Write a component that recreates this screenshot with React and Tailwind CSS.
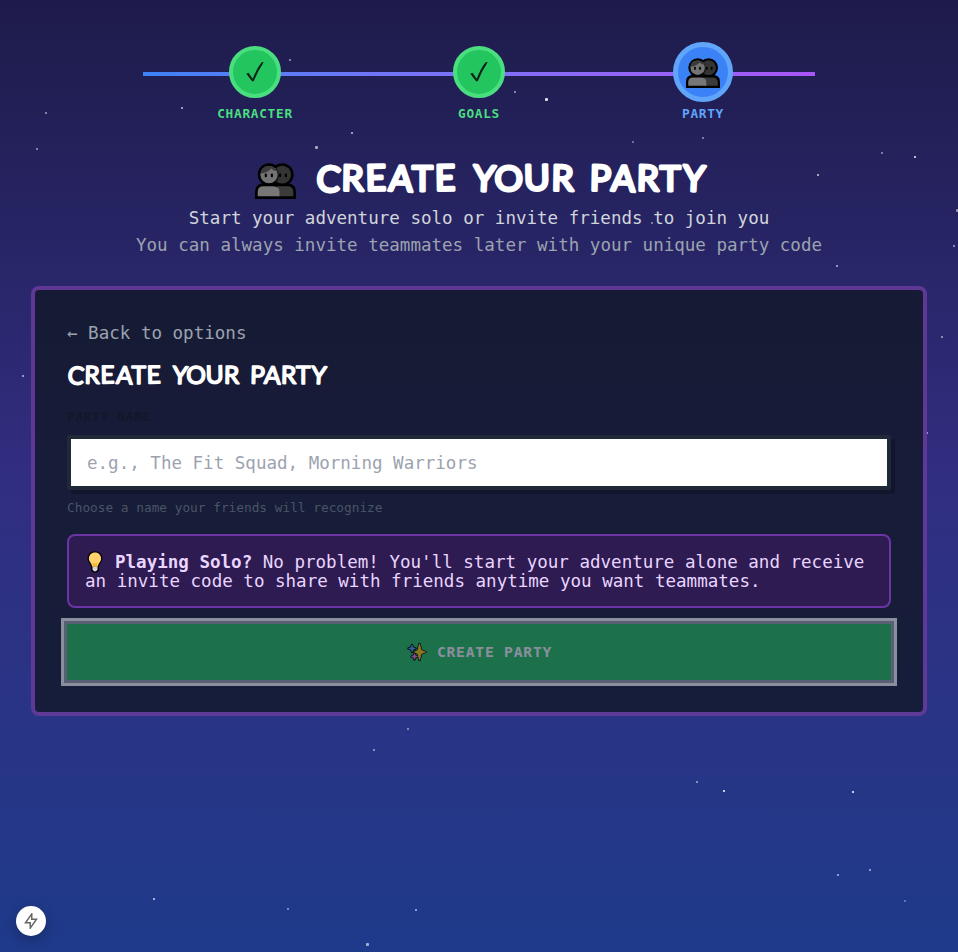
import React from "react";

const STARS = [
  [45, 112, 2, 0.45], [181, 107, 2, 0.55], [289, 59, 2, 0.45], [36, 148, 2, 0.45],
  [315, 146, 3, 0.6], [351, 132, 2, 0.55], [514, 91, 2, 0.45], [545, 98, 3, 0.85],
  [632, 141, 2, 0.35], [702, 137, 2, 0.4], [817, 174, 2, 0.6], [881, 152, 2, 0.4],
  [914, 156, 2, 0.7], [956, 209, 3, 0.5], [953, 245, 2, 0.45], [836, 265, 2, 0.5],
  [651, 222, 2, 0.4], [941, 336, 2, 0.45], [926, 432, 2, 0.5], [22, 375, 2, 0.5],
  [407, 728, 2, 0.4], [373, 749, 2, 0.45], [696, 781, 2, 0.45], [723, 790, 2, 0.75],
  [852, 791, 2, 0.75], [869, 869, 2, 0.5], [837, 874, 2, 0.5], [904, 900, 2, 0.3],
  [153, 898, 2, 0.6], [287, 908, 2, 0.4], [415, 909, 2, 0.5], [366, 943, 3, 0.6],
];

function Starfield() {
  return (
    <svg className="absolute inset-0 h-full w-full" aria-hidden="true">
      {STARS.map(([x, y, s, o]) => (
        <rect key={x + "-" + y} x={x} y={y} width={s} height={s} rx={s > 2 ? 1 : 0} fill="#fff" opacity={o} />
      ))}
    </svg>
  );
}

function People({ className }) {
  return (
    <svg viewBox="0 0 41 36" preserveAspectRatio="none" className={className} aria-hidden="true">
      <g fill="#000">
        <circle cx="14.2" cy="11.6" r="11.4" />
        <circle cx="27.2" cy="11.6" r="11.4" />
        <path d="M0 36V29Q0 20.500 8 20.500H33Q41 20.500 41 29V36Z" />
      </g>
      <circle cx="27.200" cy="11.600" r="8.900" fill="#343434" />
      <path d="M22 23.300H32Q38.300 23.300 38.300 29V33.300H22Z" fill="#3b3b3b" />
      <path d="M20 4Q24 11.500 20 19Q23.800 19 23.600 12Q23.500 7 20 4Z" fill="#111" />
      <circle cx="14" cy="11.600" r="8.700" fill="#737373" />
      <path d="M5.500 10.500Q6 3 14 2.900Q20 3 21.700 8Q18 8 16.500 5.500Q12 10 5.500 10.500Z" fill="#3b3b3b" />
      <path d="M2.700 33.300V29Q2.700 23.300 8.500 23.300H18.500Q24.500 23.500 24.500 29V33.300Z" fill="#777" />
      <g fill="#000">
        <rect x="9.700" y="10.500" width="2.200" height="3.800" rx="1" />
        <rect x="15.800" y="10.500" width="2.200" height="3.800" rx="1" />
        <rect x="24" y="10.500" width="2.200" height="3.800" rx="1" />
        <rect x="29.800" y="10.500" width="2.200" height="3.800" rx="1" />
      </g>
    </svg>
  );
}

function Check() {
  return (
    <svg viewBox="0 0 18 20" className="h-5 w-[18px]" aria-hidden="true">
      <path d="M0.300 11.800L2.500 10.700L6.700 16.800Q10.600 6.500 15.600 0.200H17.700Q12 8.500 7.700 19.300H6Z" fill="#10201a" />
    </svg>
  );
}

function Bulb() {
  return (
    <svg viewBox="0 0 16 22" className="relative -top-px ml-[2px] mr-[9px] inline-block h-[22px] w-4" aria-hidden="true">
      <path d="M8 0.300C3.600 0.300 0.600 3.500 0.600 7.600C0.600 11 3.700 13 4 16V19Q4.500 21.500 8 21.700Q11.500 21.500 12 19V16C12.300 13 15.400 11 15.400 7.600C15.400 3.500 12.400 0.300 8 0.300Z" fill="#000" />
      <path d="M8 1.600C4.300 1.600 1.900 4.300 1.900 7.600C1.900 10.800 4.800 12.500 5.300 15.700H10.700C11.200 12.500 14.100 10.800 14.100 7.600C14.100 4.300 11.700 1.600 8 1.600Z" fill="#ffd06b" />
      <path d="M5.500 11.500L8 13L10.500 11.500L9.500 15.700H6.500Z" fill="#f5b52c" />
      <path d="M5.500 16H10.500V18.500Q10 20.300 8 20.400Q6 20.300 5.500 18.500Z" fill="#d5d2e2" />
    </svg>
  );
}

function Sparkles() {
  return (
    <svg viewBox="0 0 20 20" className="mr-[10px] h-5 w-5" aria-hidden="true" strokeLinejoin="round">
      <g fill="#000" stroke="#000" strokeWidth="2.400">
        <path d="M5 3L5.900 5.600L8.500 6.500L5.900 7.400L5 10L4.100 7.400L1.500 6.500L4.100 5.600Z" />
        <path d="M7.500 11.500L8.400 13.600L10.500 14.500L8.400 15.400L7.500 17.500L6.600 15.400L4.500 14.500L6.600 13.600Z" />
        <path d="M12.500 2L14.200 8.300L18.500 10L14.200 11.700L12.500 18L10.800 11.700L7.500 10L10.800 8.300Z" />
      </g>
      <path d="M5 3L5.900 5.600L8.500 6.500L5.900 7.400L5 10L4.100 7.400L1.500 6.500L4.100 5.600Z" fill="#3fa9ef" stroke="#3fa9ef" strokeWidth="0.500" />
      <path d="M7.500 11.500L8.400 13.600L10.500 14.500L8.400 15.400L7.500 17.500L6.600 15.400L4.500 14.500L6.600 13.600Z" fill="#e87bd0" stroke="#e87bd0" strokeWidth="0.500" />
      <path d="M12.500 2L14.200 8.300L18.500 10L14.200 11.700L12.500 18L10.800 11.700L7.500 10L10.800 8.300Z" fill="#ffd500" stroke="#ffd500" strokeWidth="0.700" />
    </svg>
  );
}

function Step({ label, active }) {
  return (
    <div className="flex flex-col items-center">
      <div className="flex h-[60px] items-center">
        {active ? (
          <div className="flex h-[60px] w-[60px] items-center justify-center rounded-full border-[5px] border-[#60a5fa] bg-[#3b82f6]">
            <People className="mt-[2px] h-[30px] w-[34px]" />
          </div>
        ) : (
          <div className="flex h-[52.800px] w-[52.800px] items-center justify-center rounded-full border-[4.400px] border-[#4ade80] bg-[#22c55e]">
            <Check />
          </div>
        )}
      </div>
      <span className={"mt-[3px] text-[12.790px] font-bold leading-[18px] tracking-[0.700px] " + (active ? "text-[#60a5fa]" : "text-[#4ade80]")}>
        {label}
      </span>
    </div>
  );
}

const TILT = { C: 5, R: 1, E: -1, A: 3, T: 0, Y: 3, O: 0, U: -1, P: 1 };

function Comic({ large, words }) {
  return (
    <span className={large ? "flex text-[35.500px] leading-[46px]" : "flex text-[24.500px] leading-[30px]"}>
      {words.map(([word, width, length]) => (
        <svg key={word} width={width} height={large ? 46 : 30} className="block overflow-visible">
          <text
            x={large ? 1.5 : 0}
            y={large ? 33.5 : 23.5}
            textLength={length}
            lengthAdjust="spacing"
            rotate={[...word].map((c) => TILT[c]).join(" ")}
            fill="#fff"
            stroke="#fff"
            strokeWidth={large ? 3 : 1.6}
            strokeLinejoin="round"
            strokeLinecap="round"
            className="font-['Lato'] font-normal"
          >
            {word}
          </text>
        </svg>
      ))}
    </span>
  );
}

export default function App() {
  return (
    <div className="relative h-[952px] w-full overflow-hidden bg-linear-to-b from-[#1e1b4b] via-[#312e81] to-[#1e3a8a] font-['DejaVu_Sans_Mono',monospace] text-[17.540px]">
      <Starfield />
      <main className="relative flex flex-col px-[31px] pt-[42px]">
        <nav className="relative mx-auto grid w-[672px] grid-cols-3">
          <div className="absolute inset-x-0 top-[30px] h-1 bg-linear-to-r from-[#3b82f6] to-[#a855f7]" />
          <div className="relative"><Step label="CHARACTER" /></div>
          <div className="relative"><Step label="GOALS" /></div>
          <div className="relative"><Step label="PARTY" active /></div>
        </nav>

        <header className="flex flex-col items-center pt-[33px]">
          <h1 className="flex h-[48px] w-[448px] items-center">
            <People className="mb-[1px] mr-[18px] mt-[3px] h-9 w-[41px] shrink-0" />
            <Comic large words={[["CREATE", 157, 140], ["YOUR", 117, 101], ["PARTY", 134, 115]]} />
          </h1>
          <p className="mt-[1px] leading-[27px] text-[#d1d5db]">Start your adventure solo or invite friends to join you</p>
          <p className="leading-[27px] text-[#9ca3af]">You can always invite teammates later with your unique party code</p>
        </header>

        <section className="mt-[27px] flex h-[430px] flex-col rounded-lg border-4 border-[#a855f7]/50 bg-[#111827]/80 px-8 pt-[29px]">
          <button className="self-start leading-[28px] text-[#9ca3af]">← Back to options</button>
          <h2 className="mt-[13px] h-[30px]">
            <Comic words={[["CREATE", 105, 94], ["YOUR", 78, 67], ["PARTY", 89, 76]]} />
          </h2>
          <label className="mt-[18px] text-[12.790px] font-bold leading-[18px] tracking-[0.700px] text-[#111827]">PARTY NAME</label>
          <input
            className="mt-[9px] h-[55px] shrink-0 rounded-[2px] border-4 border-[#1f2937] bg-white px-4 shadow-[4px_4px_0_rgba(0,0,0,0.200)] outline-none placeholder:text-[#9ca3af]"
            placeholder="e.g., The Fit Squad, Morning Warriors"
          />
          <p className="mt-[9px] text-[12.790px] leading-[18px] text-[#4b5563]">Choose a name your friends will recognize</p>
          <div className="mt-[17px] h-[74px] shrink-0 rounded-lg border-2 border-[#6b35a6] bg-[#2d1b51] px-4 pt-[17px] leading-[19px] text-[#e9d5ff]">
            <div className="flex h-[19px] items-center whitespace-pre">
              <Bulb />
              <b className="ml-[3px]">Playing Solo?</b>
              <span> No problem! You&apos;ll start your adventure alone and receive</span>
            </div>
            <div>an invite code to share with friends anytime you want teammates.</div>
          </div>
          <button className="mt-4 flex h-[56px] shrink-0 items-center justify-center bg-[#22c55e] pl-px text-[14.620px] font-bold tracking-[0.800px] text-white opacity-50 shadow-[0_0_0_3px_#9ca3af,0_0_0_6px_#fff]">
            <Sparkles />
            CREATE PARTY
          </button>
        </section>
      </main>
      <button className="absolute bottom-4 left-4 flex h-[30px] w-[30px] items-center justify-center rounded-full bg-white shadow-[0_4px_12px_rgba(0,0,0,0.250)]">
        <svg viewBox="0 0 16 16" className="h-4 w-4" fill="none" stroke="#666" strokeWidth="1.500" aria-hidden="true">
          <path d="M8.750 0.900V6.250H13.500L7.250 15.100V9.750H2.500Z" />
        </svg>
      </button>
    </div>
  );
}
